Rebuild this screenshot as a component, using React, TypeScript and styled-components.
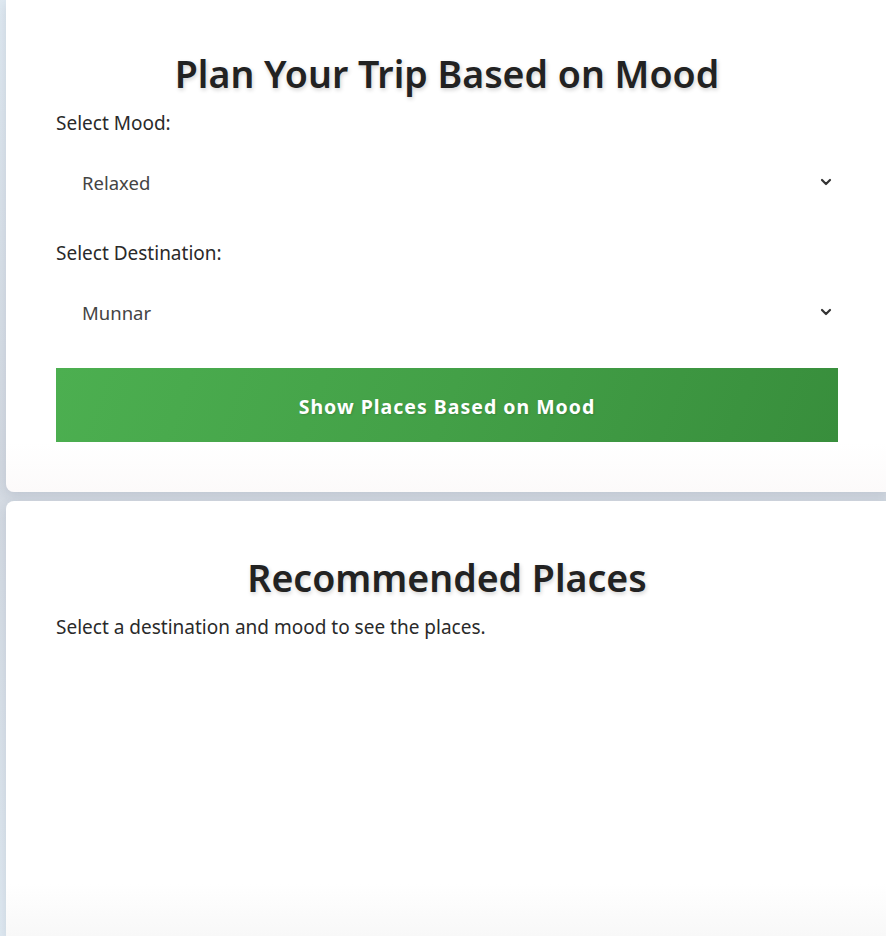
import * as React from "react";
import styled, { createGlobalStyle } from "styled-components";

const GlobalStyle = createGlobalStyle`
	html, body {
		margin: 0;
		padding: 0;
		background: #dee8f0;
		font-family: "Noto Sans", "Open Sans", Arial, sans-serif;
		color: #222;
	}
	#root {
		overflow: hidden;
	}
`;

const Page = styled.div`
	display: flex;
	flex-direction: column;
	gap: 9px;
	padding-left: 6px;
	min-height: 936px;
	background: linear-gradient(to bottom, #dfe9f1 0%, #d3d9e1 50%, #dfe9f1 100%);
`;

const Card = styled.section<{ $grow?: boolean }>`
	box-sizing: border-box;
	width: 882px;
	flex: ${(p) => (p.$grow ? "1" : "none")};
	padding: ${(p) => (p.$grow ? "52px 50px 50px" : "49px 50px 50px")};
	background: ${(p) =>
		p.$grow
			? "linear-gradient(to bottom, #ffffff 88%, #f8f8f8 100%)"
			: "linear-gradient(to bottom, #ffffff 90%, #fcfafa 100%)"};
	border-radius: ${(p) => (p.$grow ? "8px 0 0 0" : "0 0 0 8px")};
	box-shadow: 0 4px 12px rgba(40, 60, 90, 0.12);
`;

const Title = styled.h2`
	margin: 0 0 11px;
	text-align: center;
	font-size: 37.5px;
	line-height: 50px;
	font-weight: 600;
	color: #222;
	text-shadow: 1px 2px 4px rgba(0, 0, 0, 0.18);
`;

const Label = styled.label`
	display: block;
	font-size: 19px;
	line-height: 27px;
	color: #2a2a2a;
`;

const SelectWrap = styled.div<{ $last?: boolean }>`
	position: relative;
	margin: 18px 0 ${(p) => (p.$last ? "27px" : "29px")};
`;

const Select = styled.select`
	display: block;
	box-sizing: border-box;
	width: 100%;
	height: 56px;
	padding: 0 40px 2px 26px;
	border: none;
	outline: none;
	background: #fff;
	appearance: none;
	font-family: inherit;
	font-size: 18.5px;
	color: #444;
`;

const Chevron = styled.svg`
	position: absolute;
	right: 6px;
	top: 50%;
	margin-top: -7px;
	width: 12px;
	height: 12px;
	pointer-events: none;
`;

const Button = styled.button`
	display: block;
	width: 100%;
	height: 74px;
	padding: 3px 0 0;
	border: none;
	border-radius: 0;
	background: linear-gradient(110deg, #4caf50 0%, #43a047 50%, #388e3c 100%);
	color: #fff;
	font-family: inherit;
	font-size: 19.5px;
	font-weight: 700;
	letter-spacing: 1px;
	text-shadow: 1px 1px 2px rgba(0, 0, 0, 0.15);
	cursor: pointer;
`;

const Note = styled.p`
	margin: 9px 0 0;
	font-size: 19px;
	line-height: 27px;
	color: #2a2a2a;
`;

function DropDown({ options, last }: { options: string[]; last?: boolean }) {
	return (
		<SelectWrap $last={last}>
			<Select defaultValue={options[0]}>
				{options.map((o) => (
					<option key={o}>{o}</option>
				))}
			</Select>
			<Chevron viewBox="0 0 12 12">
				<path d="M2 4l4 4 4-4" fill="none" stroke="#333" strokeWidth="2.2" strokeLinecap="round" strokeLinejoin="round" />
			</Chevron>
		</SelectWrap>
	);
}

export default function App() {
	return (
		<>
			<GlobalStyle />
			<Page>
				<Card>
					<Title>Plan Your Trip Based on Mood</Title>
					<Label>Select Mood:</Label>
					<DropDown options={["Relaxed", "Adventurous", "Romantic", "Spiritual"]} />
					<Label>Select Destination:</Label>
					<DropDown options={["Munnar", "Alleppey", "Kochi", "Wayanad"]} last />
					<Button>Show Places Based on Mood</Button>
				</Card>
				<Card $grow>
					<Title>Recommended Places</Title>
					<Note>Select a destination and mood to see the places.</Note>
				</Card>
			</Page>
		</>
	);
}
